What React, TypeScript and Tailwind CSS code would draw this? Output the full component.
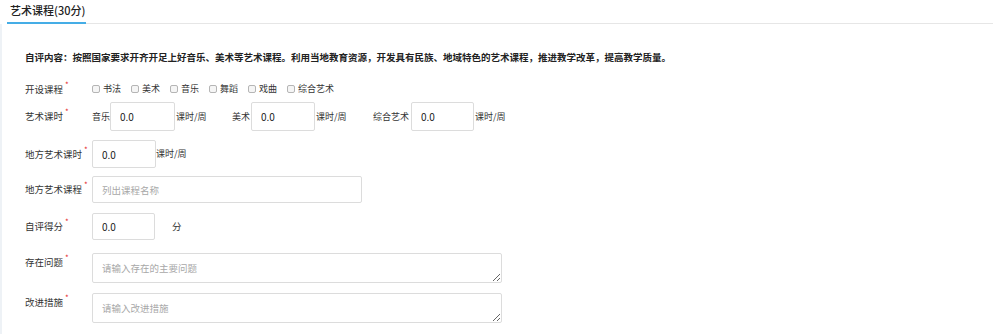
import type { ReactNode } from "react";

const font = { fontFamily: '"Noto Sans CJK SC", "Noto Sans", sans-serif' };

function Label(props: { children: ReactNode }) {
  return (
    <div className="w-[67px] shrink-0 flex flex-row items-start text-[9.5px] text-[#333]">
      <span>{props.children}</span>
      <span className="ml-[2px] text-[8px] leading-none text-[#e62b2b] -mt-[1px]">*</span>
    </div>
  );
}

function NumInput(props: { w: string }) {
  return (
    <input
      defaultValue="0.0"
      className={`${props.w} shrink-0 h-full border border-[#dcdcdc] rounded-[2px] pl-[9px] text-[10px] text-[#222] outline-none bg-white`}
    />
  );
}

const courses = ["书法", "美术", "音乐", "舞蹈", "戏曲", "综合艺术"];

export default function App() {
  return (
    <div className="w-[1000px] h-[334px] bg-white overflow-hidden flex flex-col" style={font}>
      {/* tab header */}
      <div className="mx-[7px] h-[24px] shrink-0 border-b border-[#e6e6e6] flex flex-row">
        <div className="w-[79px] h-[24px] border-b-2 border-[#45ade6] pl-[3px] pt-[3px] text-[11px] font-medium text-[#222] leading-[14px] whitespace-nowrap">
          艺术课程(30分)
        </div>
      </div>

      <div className="flex-1 border-l-2 border-[#eef2f6] pl-[23px] flex flex-col">
        <div className="mt-[26px] h-[14px] flex items-center text-[9.5px] font-bold text-[#222] whitespace-nowrap">
          自评内容：按照国家要求开齐开足上好音乐、美术等艺术课程。利用当地教育资源，开发具有民族、地域特色的艺术课程，推进教学改革，提高教学质量。
        </div>

        <div className="mt-[15px] h-[20px] flex flex-row items-center">
          <Label>开设课程</Label>
          <div className="flex flex-row items-center text-[9px] text-[#333]">
            {courses.map((c) => (
              <label key={c} className="flex flex-row items-center mr-[10px]">
                <span className="w-[8px] h-[8px] border border-[#b5b5b5] rounded-[2px] bg-[#f5f5f5] mr-[3px]" />
                {c}
              </label>
            ))}
          </div>
        </div>

        <div className="mt-[3px] h-[29px] flex flex-row items-center">
          <Label>艺术课时</Label>
          <div className="h-full flex flex-row items-center text-[9px] text-[#333] whitespace-nowrap">
            <span className="w-[18px] shrink-0">音乐</span>
            <NumInput w="w-[65px]" />
            <span className="w-[57px] shrink-0 pl-[1px]">课时/周</span>
            <span className="w-[19px] shrink-0">美术</span>
            <NumInput w="w-[64px]" />
            <span className="w-[58px] shrink-0 pl-[1px]">课时/周</span>
            <span className="w-[38px] shrink-0">综合艺术</span>
            <NumInput w="w-[63px]" />
            <span className="pl-[1px]">课时/周</span>
          </div>
        </div>

        <div className="mt-[9px] h-[28px] flex flex-row items-center">
          <Label>地方艺术课时</Label>
          <div className="h-full flex flex-row items-center text-[9px] text-[#333]">
            <NumInput w="w-[64px]" />
            <span>课时/周</span>
          </div>
        </div>

        <div className="mt-[8px] h-[27px] flex flex-row items-center">
          <Label>地方艺术课程</Label>
          <input
            placeholder="列出课程名称"
            className="w-[270px] h-full border border-[#dcdcdc] rounded-[2px] pl-[9px] text-[9.5px] outline-none placeholder:text-[#a8a8a8]"
          />
        </div>

        <div className="mt-[10px] h-[27px] flex flex-row items-center">
          <Label>自评得分</Label>
          <NumInput w="w-[63px]" />
          <span className="ml-[17px] text-[9.5px] text-[#333]">分</span>
        </div>

        <div className="mt-[13px] h-[30px] flex flex-row items-start">
          <div className="pt-[2px]">
            <Label>存在问题</Label>
          </div>
          <textarea
            placeholder="请输入存在的主要问题"
            className="w-[410px] h-full border border-[#dcdcdc] rounded-[2px] px-[9px] py-[7px] text-[9.5px] leading-[14px] outline-none placeholder:text-[#a8a8a8]"
          />
        </div>

        <div className="mt-[10px] h-[30px] flex flex-row items-start">
          <div className="pt-[2px]">
            <Label>改进措施</Label>
          </div>
          <textarea
            placeholder="请输入改进措施"
            className="w-[410px] h-full border border-[#dcdcdc] rounded-[2px] px-[9px] py-[7px] text-[9.5px] leading-[14px] outline-none placeholder:text-[#a8a8a8]"
          />
        </div>
      </div>
    </div>
  );
}
